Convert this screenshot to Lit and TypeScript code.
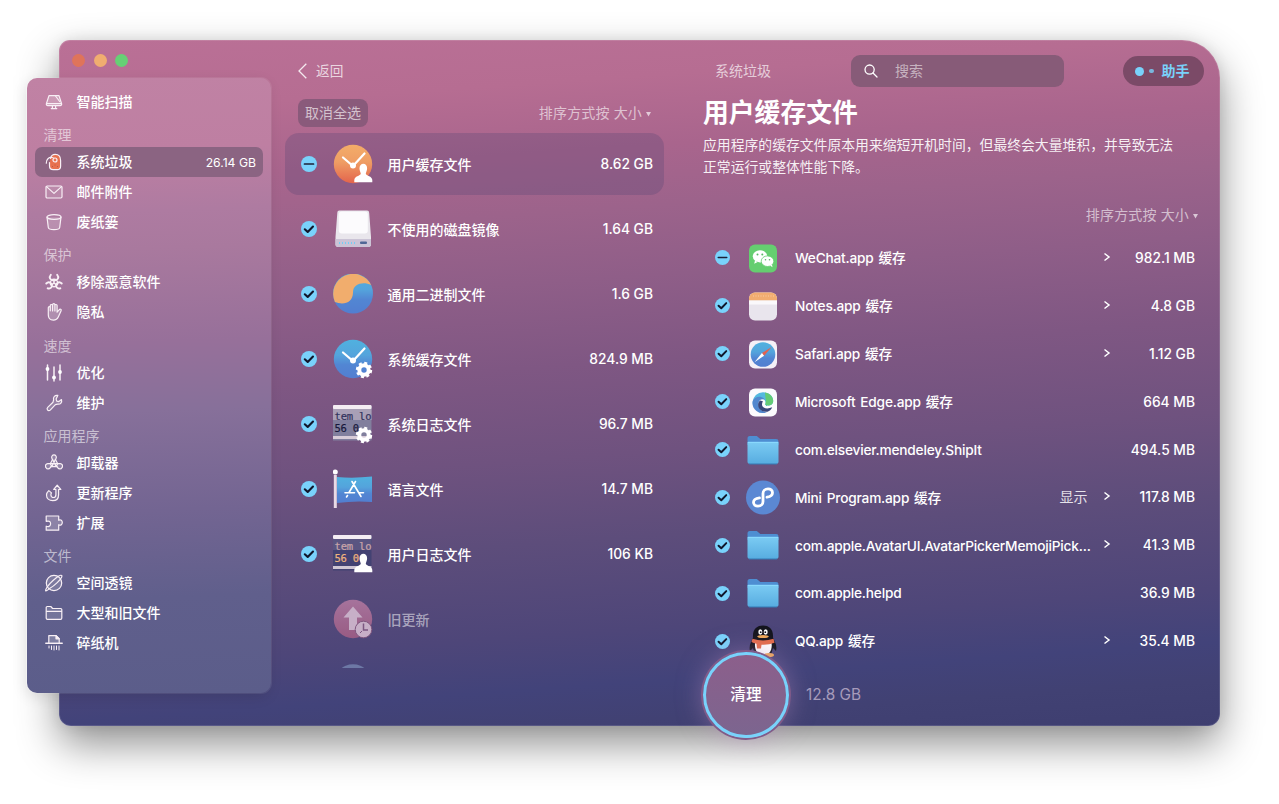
import { LitElement, html, css, svg, nothing, TemplateResult } from "lit";
import { customElement, property } from "lit/decorators.js";
import { classMap } from "lit/directives/class-map.js";

const navIcons: Record<string, TemplateResult> = {
  scan: svg`<path d="M4 2.600h10l2.600 8.200a1.500 1.500 0 0 1-1.500 1.900H2.900a1.500 1.500 0 0 1-1.500-1.900z" fill="#ffffff33"/><path d="M2 10.600h14M10.500 3l4.200 5.500M6.200 15.600h5.600M7.400 13v2.400M10.600 13v2.400"/>`,
  junk: svg`<path d="M5.600 5.400C6 3 7.600 1.400 10.200 1.400c3.400 0 5.400 2.600 5.400 6v5.800c0 2.400-1.500 3.400-3.300 3.400H8.200c-2.300 0-3.700-1.400-3.700-3.700V9.500" fill="#e8714f"/><path d="M1.300 10.200C1 6.500 4 3.800 7.200 4.500c2 .4 3 2 4.200 1.900"/><circle cx="10" cy="7" r="2" fill="#e8714f"/><path d="M7.500 13.500h.1M10 12h.1M12.500 13.500h.1" stroke-width=".6" stroke="#8f4640"/>`,
  mail: svg`<rect x="1" y="3" width="16" height="12" rx="1.200" fill="#ffffff1a"/><path d="M1.500 3.600 9 10.400l7.500-6.800"/>`,
  trash: svg`<path d="M2 4.200l1.300 10.300c.2 1.200 2.600 2.100 5.700 2.100s5.500-.9 5.700-2.100L16 4.200" fill="#ffffff2a"/><ellipse cx="9" cy="4" rx="7" ry="2.300"/>`,
  bio: svg`<g stroke-width="1.900"><path d="M5.800 1.800C3.600 4.300 5 7.600 9 7.600s5.400-3.300 3.200-5.800"/><path d="M1.300 10.500c2.300-2.400 5.900-.9 5.600 2.300-.2 2-2 3.100-4.200 2.500M16.700 10.500c-2.300-2.400-5.900-.9-5.600 2.300.2 2 2 3.100 4.200 2.500"/></g><circle cx="9" cy="10" r="3.700" stroke-width="1.400"/><path d="M9 7.500v2.200M9 10l-2.200 1.600M9 10l2.200 1.600" stroke-width="1.500"/>`,
  hand: svg`<path d="M3.300 9.500V4.800c0-1.500 2-1.500 2 0v3V2.600c0-1.500 2.300-1.500 2.300 0V8 1.800c0-1.500 2.300-1.500 2.300 0V8 2.600c0-1.500 2.200-1.500 2.200 0v6.600l2-2.400c1-1.200 2.600-.4 2 .9l-2.700 6.100c-.9 2-2.500 3.400-5 3.400-3.600 0-5.100-2.500-5.100-5.200z" fill="#ffffff33"/>`,
  sliders: svg`<g stroke-width="1.500"><path d="M2.500 1v15M9 3v14M15 1v15"/></g><circle cx="2.500" cy="5" r="1.900" fill="#fff" stroke="none"/><circle cx="9" cy="13.500" r="1.900" fill="#fff" stroke="none"/><circle cx="15" cy="8" r="1.900" fill="#fff" stroke="none"/>`,
  wrench: svg`<path d="M12.800 1.400c-2.800-.6-5 1.800-4.200 4.600L8 8.200l-5.300 5.200c-1.700 1.900.7 4.400 2.500 2.700l5.200-5.500 2.400-.5c2.600.4 4.500-1.700 3.700-4.500l-2.600 2-2.200-.5-.6-2.200z" fill="#ffffff22"/>`,
  apps: svg`<path d="M6.900 4.200a2.300 2.300 0 1 1 4.200 0l-.6 1.200 2.200 4.300h2a2.400 2.400 0 0 1 2.200 4 2.300 2.300 0 0 1-4 .2l-.7-1.300H5.800l-.7 1.300a2.300 2.300 0 0 1-4-.2 2.400 2.400 0 0 1 2.200-4h2l2.200-4.300z" fill="#ffffff2a"/><path d="M10.500 5.400 6.700 12.600M7.500 5.400l3.800 7.200M5.300 9.700h7.400M5.300 9.700l1.300 2.500M12.700 9.700l-1.300 2.500"/>`,
  update: svg`<path d="M12.200 1.200 8.700 5.500h2.200v5.200c0 3.700-5 3.700-5 0 0-.8.2-1.200.6-1.800L3.800 6.600C2.300 8 1.500 9.500 1.500 11c0 3.400 2.700 5.700 6.200 5.700 3.700 0 5.900-2.500 5.900-6V5.500h2.200z" fill="#ffffff22"/>`,
  puzzle: svg`<path d="M1.200 2h12.500v4.300c2.200-1.200 3.600.4 3.600 2.200s-1.400 3.400-3.600 2.200v5.500H1.200v-4c3.400 1.200 4.400-.8 4.400-2.400s-1-3.600-4.400-2.400z" fill="#ffffff33"/>`,
  lens: svg`<circle cx="9" cy="9" r="7.700" fill="#ffffff2a"/><path d="M4.500 14.600C1 17.700-.2 17.600 1.200 14.800 2.600 12 7 7.200 11 4s6.800-3.800 5.600-.8C15.600 5.700 10 11.500 4.500 14.600z"/>`,
  folder: svg`<path d="M1.200 14V3.600c0-.7.400-1.100 1-1.100h3.600l1.800 2h8c.8 0 1.200.4 1.200 1.100V14c0 .9-.4 1.300-1.200 1.300H2.400c-.8 0-1.200-.4-1.200-1.300z" fill="#ffffff22"/><path d="M1.500 7.300h15"/>`,
  shred: svg`<path d="M3.800 8.500V1.600h7.400l3 3v3.900" fill="#ffffff33"/><path d="M11 1.600v3.200h3.200z" fill="#fff"/><path d="M.8 9.300h16.400" stroke-width="1.500"/><path d="M4 12v2M6.500 12v3.500M9 12v4M11.500 12v3.500M14 12v4" stroke-width="1"/>`,
};

const user = svg`<path d="M26.500 24.500c-.3-6.500 8-6.500 7.600 0-.1 2.500-1 3.400-1.300 5.200.5 2.300 6.400 2.100 6.500 6.400v2.200h-18v-2.200c.1-4.300 6-4.100 6.500-6.400-.3-1.800-1.200-2.700-1.300-5.200z" fill="#fff"/>`;
const gear = svg`<g fill="none" stroke="#fff"><circle cx="31" cy="31" r="4.700" stroke-width="4"/><circle cx="31" cy="31" r="7" stroke-width="2.400" stroke-dasharray="3 2.498"/></g>`;
const hands = svg`<path d="M10 13.500 20 22 31.500 9.500" fill="none" stroke="#fff" stroke-width="2.200" stroke-linecap="round"/><circle cx="20" cy="21.500" r="3" fill="#fff"/>`;
const blue = svg`<linearGradient id="b" x2="0" y2="1"><stop stop-color="#50b1df"/><stop offset=".4" stop-color="#54a4dc"/><stop offset=".65" stop-color="#5286d3"/><stop offset="1" stop-color="#527ed0"/></linearGradient>`;

const logPanel = (dark: boolean) => svg`
  <rect x="0" y="2" width="38.500" height="34.500" fill=${dark ? "#434273" : "#817f9d"}/>
  <rect x="0" y="2" width="38.500" height="14" fill=${dark ? "#5a5581" : "#a9a0b6"}/>
  <rect x="0" y="1" width="38.500" height="4" rx="1" fill="#f4edf3"/>
  <rect x="0" y="32" width="38.500" height="3" fill=${dark ? "#cfc6d5" : "#d8ccd8"}/>
  <g font-family="DejaVu Sans Mono, monospace" font-size="10.500" stroke-width=".2">
    <text x="1.500" y="15.700" fill=${dark ? "#c9a5a9" : "#33345e"} stroke=${dark ? "#c9a5a9" : "#33345e"} textLength="37">tem lo</text>
    <text x="1.500" y="27.500" fill=${dark ? "#efb37d" : "#17183b"} stroke=${dark ? "#efb37d" : "#17183b"} textLength="24.500">56 0</text>
  </g>`;

const folderIcon = svg`<linearGradient id="f" x2="0" y2="1"><stop stop-color="#7bcbf3"/><stop offset="1" stop-color="#57ace0"/></linearGradient>
  <path d="M4.500 9c0-2 .7-2.900 2.300-2.900h7l3.500 3H33c1.700 0 2.500.8 2.500 2.500V15h-31z" fill="#4e8ed2"/>
  <path d="M4.500 12h31v19.500c0 1.600-.8 2.500-2.500 2.500H7c-1.700 0-2.500-.9-2.500-2.500z" fill="url(#f)"/><path d="M5 12.300h30" stroke="#8edcff"/><path d="M6 34h28" stroke="#347bb5"/>`;

const art: Record<string, TemplateResult> = {
  userCache: svg`<linearGradient id="o" x2="0" y2="1"><stop stop-color="#f3ad69"/><stop offset=".45" stop-color="#ef9d64"/><stop offset="1" stop-color="#e3644c"/></linearGradient><circle cx="20" cy="20" r="19.200" fill="url(#o)"/>${hands}${user}`,
  disk: svg`<path d="M6.500 1.500h27.500c1.500 0 2 .8 2.200 2.500L38 28v7.500c0 1.500-1 2.500-2.500 2.500H5c-1.500 0-2.500-1-2.500-2.500V28L4.300 4c.1-1.700.7-2.500 2.200-2.500z" fill="#e9e6ec"/><rect x="5.800" y="2.500" width="29" height="22" rx="3" fill="#fcfbfd"/><path d="M2.600 30H38v5.500c0 1.500-1 2.500-2.500 2.500H5c-1.500 0-2.500-1-2.500-2.500z" fill="#cbc4d6"/><rect x="27" y="32.500" width="7" height="2.500" rx="1" fill="#506795"/><path d="M6 34h18" stroke="#77cef4" stroke-width="2" stroke-dasharray="1 2"/>`,
  binary: svg`${blue}<circle cx="20" cy="19.500" r="20" fill="url(#b)"/><path d="M1.900 28A20 20 0 0 1 38.100 11C31 7.500 20 9 20 18.500 20 28.500 11 31.500 1.900 28z" fill="#f1ad6d"/>`,
  sysCache: svg`${blue}<circle cx="20" cy="20" r="19.200" fill="url(#b)"/>${hands}${gear}`,
  sysLog: svg`${logPanel(false)}${gear}`,
  lang: svg`${blue}<path d="M4 8q17 1.500 35-.5v25.500Q22 31.500 4 34z" fill="url(#b)"/><path d="M2.300 6v33" stroke="#e9dbe6" stroke-width="3"/><circle cx="2.300" cy="3" r="2.500" fill="#fff"/><path d="M19 12.500l9 15M22.500 12.500l-6.500 11M14.500 26.500l-1 1.500M12 23.700h9.500M26 23.700h4.500" stroke="#fff" stroke-width="1.600" stroke-linecap="round"/>`,
  userLog: svg`${logPanel(true)}${user}`,
  oldUpdate: svg`<linearGradient id="p" x2="0" y2="1"><stop stop-color="#a6739c"/><stop offset="1" stop-color="#985b83"/></linearGradient><circle cx="20" cy="20" r="19.200" fill="url(#p)"/><path d="M20 7.500 10.500 18.500H16V31h8V18.500h5.500z" fill="#c7afc7"/><circle cx="30.500" cy="30.500" r="8.300" fill="#c7afc7" stroke="#80577f"/><path d="M30.500 24.500v6.500h4.500" fill="none" stroke="#7c5781" stroke-width="1.500"/><path d="M27 34l2-2" stroke="#7c5781"/>`,
  more: svg`<circle cx="20" cy="19.500" r="19.200" fill="#6d78a5"/>`,
  wechat: svg`<rect x="6" y="6.500" width="28" height="28" rx="6" fill="#65ce70"/><ellipse cx="17" cy="18.300" rx="7.200" ry="6.100" fill="#fff"/><path d="M12 22.500l-.8 3.300 3.500-1.800z" fill="#fff"/><ellipse cx="24.500" cy="23.200" rx="6.300" ry="5.300" fill="#fff" stroke="#65ce70" stroke-width=".8"/><path d="M27 27.500l2.500 1.800-.5-2.800z" fill="#fff"/><g fill="#57b863"><circle cx="14.500" cy="16.500" r="1"/><circle cx="19.300" cy="16.500" r="1"/><circle cx="22.500" cy="21.700" r=".8"/><circle cx="26.500" cy="21.700" r=".8"/></g>`,
  notes: svg`<rect x="6" y="6.500" width="28" height="28" rx="6" fill="#e9e5ed"/><path d="M6 14.500v-2a6 6 0 0 1 6-6h16a6 6 0 0 1 6 6v2z" fill="#f2ad70"/><path d="M6 14.500h28v4H6z" fill="#faf8fb"/><path d="M10 10h21" stroke="#f9d4b0" stroke-width=".8" stroke-dasharray="1 1.500"/>`,
  safari: svg`${blue}<rect x="6" y="6.500" width="28" height="28" rx="6" fill="#f5f1f7"/><circle cx="20" cy="20.500" r="12.300" fill="url(#b)"/><path d="M28.700 13 18.900 19.100l2.200 2.600z" fill="#e3624f"/><path d="M11.500 28.300l7.400-9.200 2.200 2.600z" fill="#fff"/>`,
  edge: svg`<rect x="6" y="6.500" width="28" height="28" rx="6" fill="#fcfbfd"/><path d="M9.700 20A10.300 10.300 0 0 1 20 10.200c6 0 10.200 4 10.200 8.600 0 3.500-2.400 4.700-5.200 4.700-2.300 0-3.500-.8-2.500-2 .5-2.500-1-5-5-5-4.500 0-7.500 2.500-7.800 6.500z" fill="#55b9df"/><path d="M22 10.400c5 .8 8.200 4.400 8.200 8.400 0 3.500-2.400 4.700-5.200 4.700-2.300 0-3.300-.8-2.500-2 1-3-.5-7-.5-11.100z" fill="#64cb75"/><path d="M9.700 19c1.500-4 8-6.500 12-1.500-5-1-7 2-6 6.500 1 3.500 4 6 8.300 5.900A10 10 0 0 1 9.700 19z" fill="#5288ce"/><path d="M17 18.500c-4 3.500-1.500 11.500 6.500 11.300 3 0 5-2.500 5.700-4.500-4.200 2-9.700 1.500-10.200-2.500 0-1.700.5-3 1-3.600z" fill="#394679"/>`,
  folder: folderIcon,
  mini: svg`<circle cx="20" cy="20.500" r="17" fill="#5b88d3"/><path d="M16.500 20.800c-3.300.4-6 1.900-6 4.500 0 2.200 1.900 3.900 4.500 3.900 3 0 5-2 5-4.700v-8c0-2.700 2-4.700 5-4.700 2.600 0 4.500 1.700 4.500 3.900 0 2.600-2.500 4-5.500 4.500" fill="none" stroke="#fff" stroke-width="2.800" stroke-linecap="round"/>`,
  qq: svg`<path d="M10 16.500C9.500 8 14 4.500 20 4.500S30.500 8 30 16.500c1.500 4 4.500 8 3 13.500l-3-3-1.500 5h-17L10 27l-3 3c-1.500-5.500 1.500-9.500 3-13.500z" fill="#14151d"/><path d="M12.500 20h15.500c2 6 0 14.500-7.500 14.500S10.800 26 12.500 20z" fill="#fff"/><path d="M9.500 17.700q10.500 3.500 21 0l1 4q-6 2.500-13 2l-.5 3.800h-4l-.5-4.800q-3-.6-5-1.700z" fill="#e46c4a"/><ellipse cx="17.300" cy="11" rx="2" ry="2.700" fill="#fff"/><ellipse cx="22.700" cy="11" rx="2" ry="2.700" fill="#fff"/><circle cx="17.700" cy="11.200" r=".9" fill="#14151d"/><circle cx="22.300" cy="11.200" r=".9" fill="#14151d"/><ellipse cx="20" cy="15.600" rx="5.800" ry="1.500" fill="#f0a95a"/><ellipse cx="26" cy="34" rx="5" ry="2" fill="#f0a95a"/>`,
};

const check = (kind: string) => html`<svg class="check" viewBox="0 0 16 16">
  <circle cx="8" cy="8" r="8" fill="#79d2fb"/>
  ${kind === "part"
    ? svg`<path d="M3.500 8h9" stroke="#1c2037" stroke-width="1.700" stroke-linecap="round"/>`
    : svg`<path d="M3.800 8.300 6.700 10.900 12 5.500" fill="none" stroke="#10162b" stroke-width="2.100" stroke-linecap="round" stroke-linejoin="round"/>`}
</svg>`;

@customElement("side-nav")
export class SideNav extends LitElement {
  static styles = css`
    :host {
      display: block;
      box-sizing: border-box;
      padding: 9.5px 8px 0 8px;
      border-radius: 10px;
      background: linear-gradient(178deg, #c082a4 0%, #be7fa2 12%, #ae7ba1 22%, #a9799e 28%, #97709a 43%, #87709a 54%, #736592 70%, #605f8c 84%, #5b5d8a 100%);
      box-shadow: -1px 0 0 #ffffff66, 0 0 0 1px #ffffff14, -2px 4px 14px #0000001a;
    }
    .heading {
      box-sizing: border-box;
      height: 30.3px;
      padding: 8px 0 0 9px;
      line-height: 20px;
      color: #ffffff94;
    }
    .item {
      box-sizing: border-box;
      height: 29.5px;
      margin-bottom: 0.5px;
      padding: 0 7px 0 10px;
      display: flex;
      align-items: center;
      border-radius: 7px;
      font-weight: 500;
      color: #fff;
    }
    .item.on { background: #8b6482; }
    .item svg {
      width: 18px;
      height: 18px;
      margin-right: 14px;
      fill: none;
      stroke: #f8eff5;
      stroke-width: 1.2;
      stroke-linejoin: round;
      stroke-linecap: round;
    }
    .size { margin-left: auto; font-size: 12.2px; font-weight: 400; padding-top: 1px; }
  `;

  private sections: [string, [string, string, string?][]][] = [
    ["", [["scan", "智能扫描"]]],
    ["清理", [["junk", "系统垃圾", "26.14 GB"], ["mail", "邮件附件"], ["trash", "废纸篓"]]],
    ["保护", [["bio", "移除恶意软件"], ["hand", "隐私"]]],
    ["速度", [["sliders", "优化"], ["wrench", "维护"]]],
    ["应用程序", [["apps", "卸载器"], ["update", "更新程序"], ["puzzle", "扩展"]]],
    ["文件", [["lens", "空间透镜"], ["folder", "大型和旧文件"], ["shred", "碎纸机"]]],
  ];

  render() {
    return this.sections.map(([title, items]) => html`
      ${title ? html`<div class="heading">${title}</div>` : nothing}
      ${items.map(([icon, label, size]) => html`
        <div class=${classMap({ item: true, on: !!size })}>
          <svg viewBox="0 0 18 18">${navIcons[icon]}</svg>
          <span>${label}</span>
          ${size ? html`<span class="size">${size}</span>` : nothing}
        </div>`)}
    `);
  }
}

@customElement("file-row")
export class FileRow extends LitElement {
  @property() icon = "";
  @property() label = "";
  @property() size = "";
  @property() state = "full";
  @property() action = "";
  @property({ type: Boolean }) arrow = false;

  static styles = css`
    :host {
      display: flex;
      align-items: center;
      box-sizing: border-box;
      color: #fff;
      font-weight: 500;
      white-space: nowrap;
    }
    .slot { width: var(--check, 16px); height: var(--check, 16px); flex: none; display: flex; }
    .check { width: 100%; height: 100%; }
    .art { width: 40px; height: 40px; flex: none; margin-left: var(--art-gap, 16.5px); }
    .label {
      flex: 1;
      min-width: 0;
      margin-left: var(--label-gap, 14.5px);
      padding-top: var(--label-drop, 1.5px);
      font-size: var(--label-size, 14px);
      letter-spacing: var(--label-spacing, 0);
      word-spacing: 1.5px;
    }
    .off { color: #ffffff85; }
    .action { font-weight: 400; color: #ffffffd9; margin-bottom: 1px; }
    .chevron { width: 8px; height: 10px; flex: none; margin: 0 0 2px 15.5px; }
    .size { width: var(--size-width, 83.5px); flex: none; text-align: right; font-size: 13.8px; }
    .chevron + .size { width: 84px; }
  `;

  render() {
    return html`
      <span class="slot">${this.state === "none" ? nothing : check(this.state)}</span>
      <svg class="art" viewBox="0 0 40 40">${art[this.icon]}</svg>
      <span class=${classMap({ label: true, off: this.state === "none" })}>${this.label}</span>
      ${this.action ? html`<span class="action">${this.action}</span>` : nothing}
      ${this.arrow ? html`<svg class="chevron" viewBox="0 0 8 10"><path d="M1.500 1.500 6 5 1.500 8.500" fill="none" stroke="#fff" stroke-width="1.500"/></svg>` : nothing}
      <span class="size">${this.size}</span>
    `;
  }
}

@customElement("app-root")
export class AppRoot extends LitElement {
  static styles = css`
    :host {
      display: block;
      box-sizing: border-box;
      width: 1279px;
      height: 804px;
      padding: 40px 60px 78px 59px;
      overflow: hidden;
      background: #fff;
      font: 400 14px/20px Inter, "Noto Sans CJK SC", sans-serif;
      -webkit-font-smoothing: antialiased;
    }
    .window {
      display: flex;
      width: 1160.5px;
      height: 686px;
      border-radius: 11px 38px 12px 12px;
      background: linear-gradient(176deg, #ba7096 0%, #b66d92 10%, #a9658d 19%, #9c638b 27%, #8f5e88 36%, #7f5783 47%, #6f527f 59%, #5d4d7b 70%, #4e4679 82%, #42437a 89%, #414173 94%, #3e3e70 100%);
      box-shadow: inset 0 0 0 1px #ffffff1f, 0 18px 42px #00000070, 0 0 14px #00000014;
    }
    .left { width: 212px; flex: none; }
    .lights { display: flex; gap: 8.5px; height: 37.5px; padding: 14px 0 0 13px; box-sizing: border-box; }
    .light { width: 13px; height: 13px; border-radius: 50%; }
    .red { background: #df745a; }
    .amber { background: #f0ad70; }
    .green { background: #66d075; }
    side-nav { width: 244.5px; height: 615.5px; margin-left: -32.5px; }
    .middle { width: 379px; margin-left: 14px; flex: none; }
    .back { display: flex; align-items: center; gap: 9.5px; height: 32px; margin: 15px 0 12px 12.5px; color: #ffffffb8; font-size: 13.7px; }
    .back svg { width: 9px; height: 16px; }
    .tools { display: flex; align-items: center; justify-content: space-between; height: 28px; padding: 0 13px 0 13px; }
    .button { padding: 4px 7px; border-radius: 8px; background: #8a5a7b; color: #ffffffa3; }
    .sort { display: flex; align-items: center; gap: 4px; color: #ffffff99; letter-spacing: 0.15px; }
    .sort svg { width: 5px; height: 6px; margin-top: 1px; }
    .groups { height: 536.5px; margin-top: 4.5px; overflow: hidden; }
    .groups file-row { height: 62px; margin: 1.5px 0 3px; padding: 0 11px 0 15.5px; border-radius: 14px; }
    .groups file-row.on { background: #483f6f40; }
    .right { flex: 1; min-width: 0; padding: 15px 24.5px 0 39px; }
    .head { display: flex; align-items: center; height: 32px; margin-right: -8.5px; }
    .crumb { width: 136px; margin-left: 12px; color: #ffffffad; }
    .search { display: flex; align-items: center; gap: 17px; box-sizing: border-box; width: 213px; height: 32px; padding-left: 13px; border-radius: 9px; background: #875b78; color: #ffffff8c; }
    .search svg { width: 14px; height: 14px; }
    .helper { display: flex; align-items: center; box-sizing: border-box; width: 81px; height: 30px; margin-left: auto; padding-left: 12.5px; border-radius: 15px; background: #7b4a67; color: #79d2fb; font-weight: 700; }
    .dot { width: 9px; height: 9px; border-radius: 50%; background: #79d2fb; margin-right: 5px; }
    .dot.small { width: 4.5px; height: 4.5px; opacity: 0.8; margin-right: 8px; }
    h1 { margin: 8px 0 2.500px; font-size: 25.8px; line-height: 36px; font-weight: 700; color: #fff; }
    p { margin: 0 -10px 0 0; font-size: 13.84px; line-height: 22px; color: #ffffffeb; }
    .right .sort { justify-content: flex-end; height: 20px; margin: 27.5px -3px 9px 0; }
    .files file-row {
      height: 47.9px;
      padding-left: 12px;
      --check: 15px;
      --art-gap: 13px;
      --label-gap: 12px;
      --label-drop: 0.5px;
      --label-size: 13.7px;
      --label-spacing: -0.2px;
    }
    .foot { display: flex; align-items: center; height: 86px; margin-top: -13.5px; }
    .clean {
      box-sizing: border-box;
      width: 86px;
      height: 86px;
      display: flex;
      align-items: center;
      justify-content: center;
      z-index: 1;
      border: 3.5px solid #79d2fb;
      border-radius: 50%;
      background: linear-gradient(#8c5f8b, #7c658f);
      box-shadow: 0 0 0 2px #805b89, 0 0 26px #b78bbd80;
      color: #fff;
      font-size: 15.7px;
      font-weight: 500;
    }
    .total { margin-left: 17px; padding-top: 1px; font-size: 15.4px; color: #a69bbb; }
  `;

  private groups: [string, string, string, string][] = [
    ["userCache", "用户缓存文件", "8.62 GB", "part"],
    ["disk", "不使用的磁盘镜像", "1.64 GB", "full"],
    ["binary", "通用二进制文件", "1.6 GB", "full"],
    ["sysCache", "系统缓存文件", "824.9 MB", "full"],
    ["sysLog", "系统日志文件", "96.7 MB", "full"],
    ["lang", "语言文件", "14.7 MB", "full"],
    ["userLog", "用户日志文件", "106 KB", "full"],
    ["oldUpdate", "旧更新", "", "none"],
    ["more", "", "", "none"],
  ];

  private files: [string, string, string, boolean, string?][] = [
    ["wechat", "WeChat.app 缓存", "982.1 MB", true],
    ["notes", "Notes.app 缓存", "4.8 GB", true],
    ["safari", "Safari.app 缓存", "1.12 GB", true],
    ["edge", "Microsoft Edge.app 缓存", "664 MB", false],
    ["folder", "com.elsevier.mendeley.ShipIt", "494.5 MB", false],
    ["mini", "Mini Program.app 缓存", "117.8 MB", true, "显示"],
    ["folder", "com.apple.AvatarUI.AvatarPickerMemojiPick...", "41.3 MB", true],
    ["folder", "com.apple.helpd", "36.9 MB", false],
    ["qq", "QQ.app 缓存", "35.4 MB", true],
  ];

  private sort() {
    return html`<div class="sort">排序方式按 大小 <svg viewBox="0 0 5 6"><path d="M0 1h5L2.500 5.500z" fill="#ffffffa6"/></svg></div>`;
  }

  render() {
    return html`
      <div class="window">
        <div class="left">
          <div class="lights"><i class="light red"></i><i class="light amber"></i><i class="light green"></i></div>
          <side-nav></side-nav>
        </div>
        <div class="middle">
          <div class="back">
            <svg viewBox="0 0 9 16"><path d="M8.300.7 1 8l7.300 7.300" fill="none" stroke="#fff" stroke-opacity=".85" stroke-width="1.300"/></svg>返回
          </div>
          <div class="tools"><span class="button">取消全选</span>${this.sort()}</div>
          <div class="groups">
            ${this.groups.map(([icon, label, size, state], i) => html`
              <file-row class=${classMap({ on: i === 0 })} .icon=${icon} .label=${label} .size=${size} .state=${state}></file-row>`)}
          </div>
        </div>
        <div class="right">
          <div class="head">
            <span class="crumb">系统垃圾</span>
            <div class="search">
              <svg viewBox="0 0 14 14" fill="none" stroke="#fff" stroke-width="1.300" stroke-linecap="round"><circle cx="5.600" cy="5.600" r="4.600"/><path d="M9 9l4 4"/></svg>搜索
            </div>
            <div class="helper"><i class="dot"></i><i class="dot small"></i>助手</div>
          </div>
          <h1>用户缓存文件</h1>
          <p>应用程序的缓存文件原本用来缩短开机时间，但最终会大量堆积，并导致无法<br>正常运行或整体性能下降。</p>
          ${this.sort()}
          <div class="files">
            ${this.files.map(([icon, label, size, arrow, action], i) => html`
              <file-row .icon=${icon} .label=${label} .size=${size} .arrow=${arrow} .action=${action ?? ""}
                .state=${i === 0 ? "part" : "full"}></file-row>`)}
          </div>
          <div class="foot"><div class="clean">清理</div><span class="total">12.8 GB</span></div>
        </div>
      </div>
    `;
  }
}
